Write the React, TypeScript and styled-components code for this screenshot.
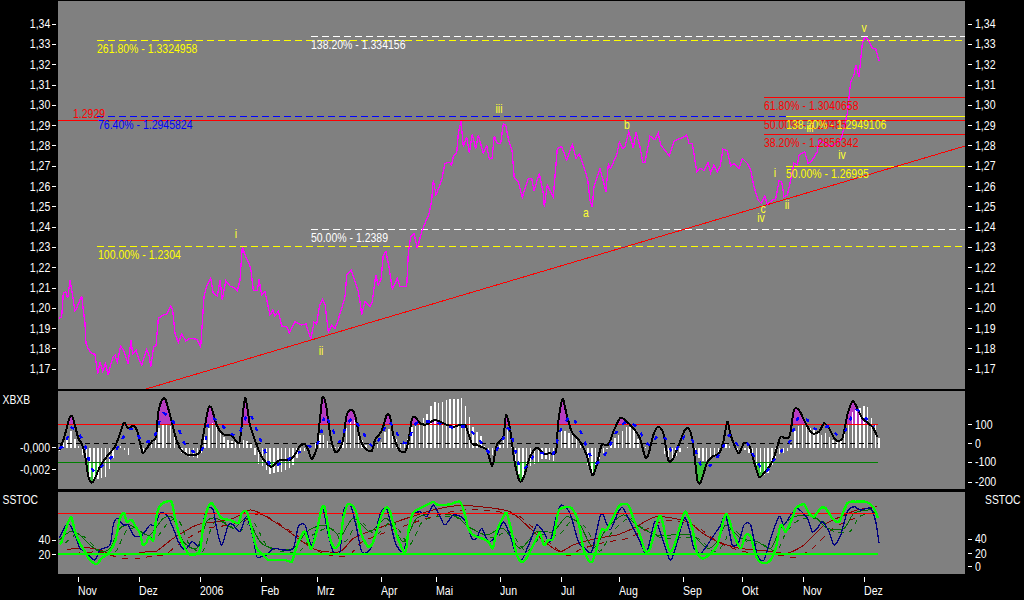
import React from "react"
import styled, { createGlobalStyle } from "styled-components"

const GlobalStyle = createGlobalStyle`
  html, body {
    margin: 0;
    padding: 0;
    background: #000;
  }
`

const Page = styled.div`
  width: 1024px;
  height: 600px;
  padding-top: 1px;
  box-sizing: border-box;
  background: #000;
  color: #fff;
  font-family: "Liberation Sans", Arial, sans-serif;
  font-size: 12px;
  overflow: hidden;
`

const Row = styled.div<{ $h: number; $mb?: number }>`
  display: grid;
  grid-template-columns: 58px 907px 59px;
  height: ${(p) => p.$h}px;
  margin-bottom: ${(p) => p.$mb ?? 0}px;
`

const Axis = styled.div<{ $top?: number }>`
  display: flex;
  flex-direction: column;
  padding-top: ${(p) => p.$top ?? 0}px;
`

const Tick = styled.div<{ $right?: boolean; $mt?: number; $h?: number }>`
  display: flex;
  flex-direction: ${(p) => (p.$right ? "row-reverse" : "row")};
  justify-content: flex-end;
  align-items: center;
  gap: ${(p) => (p.$right ? 3 : 2)}px;
  height: ${(p) => p.$h ?? 12}px;
  margin-top: ${(p) => p.$mt ?? 0}px;
  padding: ${(p) => (p.$right ? "0 0 0 3px" : "0 2px 0 0")};
  line-height: 12px;
  white-space: nowrap;
`

// the reference font is narrower than Liberation at the same height
const TickLabel = styled.span<{ $right?: boolean }>`
  display: inline-block;
  transform: scaleX(0.88);
  transform-origin: ${(p) => (p.$right ? "left" : "right")} center;
`

const TickMark = styled.i`
  display: block;
  width: 4px;
  height: 1px;
  background: #fff;
`

const PanelTitle = styled.div<{ $mt?: number; $left?: number }>`
  height: 14px;
  line-height: 14px;
  margin-top: ${(p) => p.$mt ?? 0}px;
  padding-left: ${(p) => p.$left ?? 3}px;
  white-space: nowrap;
  transform: scaleX(0.86);
  transform-origin: left center;
`

const RightTitle = styled(PanelTitle)`
  margin-left: 20px;
  padding-left: 0;
`

const Plot = styled.div`
  background: #808080;
  overflow: hidden;

  svg {
    display: block;
  }
  text {
    font-family: "Liberation Sans", Arial, sans-serif;
    font-size: 12px;
  }
`

const TimeAxis = styled.div`
  display: flex;
  height: 26px;
  padding-left: 78px;
`

const TimeCell = styled.div<{ $w: number }>`
  width: ${(p) => p.$w}px;
  flex: none;
  padding-top: 3px;
`

const TimeMark = styled.i`
  display: block;
  width: 1px;
  height: 5px;
  background: #fff;
`

const TimeLabel = styled.div`
  margin-top: 3px;
  line-height: 13px;
  white-space: nowrap;
  transform: scaleX(0.88);
  transform-origin: left center;
`

type Pt = [number, number]

// points were read off at 3x from crops, so map them back to page coords
function seg(ox: number, oy: number, raw: string): Pt[] {
  return raw
    .trim()
    .split(/\s+/)
    .map((s) => {
      const [x, y] = s.split(",").map(Number)
      return [ox + x / 3, oy + y / 3] as Pt
    })
}

const toStr = (pts: Pt[]) => pts.map(([x, y]) => `${x.toFixed(1)},${y.toFixed(1)}`).join(" ")

// catmull-rom through the points, the indicators are smooth in the reference
function smooth(pts: Pt[]) {
  let d = `M${pts[0][0].toFixed(1)} ${pts[0][1].toFixed(1)}`
  for (let i = 0; i < pts.length - 1; i++) {
    const p0 = pts[Math.max(i - 1, 0)]
    const p1 = pts[i]
    const p2 = pts[i + 1]
    const p3 = pts[Math.min(i + 2, pts.length - 1)]
    const c1x = p1[0] + (p2[0] - p0[0]) / 8
    const c1y = p1[1] + (p2[1] - p0[1]) / 8
    const c2x = p2[0] - (p3[0] - p1[0]) / 8
    const c2y = p2[1] - (p3[1] - p1[1]) / 8
    d += `C${c1x.toFixed(1)} ${c1y.toFixed(1)} ${c2x.toFixed(1)} ${c2y.toFixed(1)} ${p2[0].toFixed(1)} ${p2[1].toFixed(1)}`
  }
  return d
}

const price = [
  ...seg(0, 200, `178,355 185,350 190,280 197,275 203,295 210,240 215,270 225,333 232,320 245,287 250,330 255,370 258,430 265,447 275,460 285,463 293,522 300,487 308,513 316,490 325,525 333,490 340,470 345,465 352,487 362,438 372,453 384,492 393,420 398,462 408,450 417,480 425,495 440,448 447,465 452,500 461,440 468,437 475,355 490,345 500,343 512,318 518,330 525,400 535,428 545,402 557,423 570,415 590,418 602,440 612,290 620,258 632,235 640,280 652,288 660,240 667,300 677,242 690,258 705,265 712,272 720,240 727,140 735,165 745,185 752,205 760,270 772,272 777,238 785,285 795,275 810,345 818,330 825,348 835,333 845,378 860,380 868,398 885,365 905,375 918,372 925,395 933,416 942,366 950,372 958,320 967,298 975,312 985,395 995,375 1005,385 1015,360`),
  ...seg(340, 200, `0,340 8,315 15,290 20,225 33,210 42,235 55,275 62,320 65,345 75,305 90,320 97,305 107,225 115,255 123,240 130,165 138,155 147,200 157,268 172,235 180,260 200,260 205,160 212,110 222,100 232,145 245,95 257,65 268,40`),
  ...seg(340, 0, `275,600 280,540 288,585 305,540 315,490 328,487 335,495 340,470 350,458 355,400 363,362 370,440 380,410 388,460 397,403 407,447 415,405 430,460 440,437 448,477 456,475 463,407 472,430 482,430 490,372 497,375 507,425 516,450 523,535 535,545 547,592 565,535 575,535 582,572 598,520 610,580 613,620 622,555 640,590 652,445 665,440 680,480 697,433 708,475 718,462 735,510 743,540 750,600 757,621 762,560 780,505 798,575 805,492 812,505 830,465 838,427 848,445 855,440 866,395 880,445 888,395 900,440 908,487 915,487 930,408 945,420 955,400 962,435 988,468 1003,423`),
  ...seg(684, 0, `0,410 8,405 15,430 25,430 38,515 50,505 60,512 72,488 80,518 90,495 100,515 108,500 117,448 130,452 140,498 150,490 165,505 175,475 190,490 200,510 210,560 222,600 232,610 242,587 250,613 265,600 275,597 285,543 293,545 300,590 310,585 320,540 330,490 340,495 345,465 362,455 372,490 382,485 400,455 405,420 440,440 470,420 480,385 490,340 500,245 510,225 515,195 525,230 535,130 542,112 550,115 565,145 575,147 585,182`),
]

const macdBars = [
  ...seg(0, 385, `178,200 190,175 205,150 215,135 225,165 240,190 258,235 270,275 285,285 300,280 320,275 335,230 350,190 365,183 385,210 400,185 415,190 430,200 445,180 470,150 480,120 500,120 515,125 530,170 545,205 570,215 600,222 610,170 625,130 640,110 655,130 675,160 700,170 735,165 750,170 760,190 770,232 790,245 812,268 830,260 850,260 880,240 900,200 930,195 945,180 960,150 975,150 990,185`),
  ...seg(340, 385, `0,185 10,170 25,110 40,100 55,130 70,175 90,190 105,180 125,170 140,125 160,150 180,175 200,175 215,125 240,110 260,90 280,48 300,55 325,42 350,42 365,40 380,70 395,120 410,140 425,155 440,200 455,212 470,195 490,165 505,130 515,185 530,250 545,285 560,255 575,240 590,235 610,220 640,230 650,185 665,130 680,140 700,150 725,175 740,230 755,270 770,240 785,210 800,195 820,165 840,145 860,125 880,125 900,180 915,185 930,190 950,190 965,190 985,225 1000,220`),
  ...seg(684, 385, `5,185 20,185 35,210 50,225 65,230 85,220 105,205 120,175 140,185 165,200 190,195 205,220 220,245 235,270 250,270 270,225 290,205 305,205 320,185 335,130 350,120 370,125 390,135 410,150 425,145 445,165 470,165 490,130 505,80 520,75 542,60 555,70 565,108 575,120 585,160`),
]

const macdLine = [
  ...seg(0, 385, `178,195 190,165 200,130 208,100 215,93 222,110 235,160 245,175 255,210 265,275 275,293 285,280 300,245 320,215 345,185 360,145 372,113 385,130 400,122 412,140 425,195 430,205 440,190 455,170 468,155 475,80 488,42 497,45 510,90 525,150 540,190 560,208 585,210 600,200 610,150 625,70 635,70 650,120 670,148 695,152 710,170 720,165 735,40 750,120 770,180 785,215 800,235 815,245 840,225 870,225 890,200 900,182 915,178 925,195 935,222 950,190 960,100 968,35 978,60 990,145 1005,200`),
  ...seg(340, 385, `0,190 10,160 20,90 33,75 45,90 60,160 75,190 95,198 105,165 120,145 128,130 140,90 150,95 160,150 178,195 195,200 205,170 215,105 225,95 240,115 260,118 285,105 310,115 340,125 375,120 395,175 415,182 440,195 457,243 470,180 490,155 498,90 510,130 522,220 537,285 545,288 555,265 570,215 590,188 610,205 630,205 648,200 655,110 668,42 678,80 695,140 720,170 740,210 757,270 770,240 785,180 805,180 820,140 840,100 855,105 880,130 900,160 915,215 925,210 940,150 955,125 970,145 985,225 1000,220`),
  ...seg(684, 385, `0,140 12,130 22,150 30,200 40,285 48,295 58,270 68,235 85,215 105,205 118,170 130,110 140,150 155,190 165,205 180,175 195,180 210,230 225,275 240,265 265,230 280,185 290,155 305,160 318,150 330,75 345,75 365,115 385,145 405,140 420,115 435,130 455,165 475,160 490,90 505,50 515,60 535,100 565,125 580,155`),
]

const macdSignal = [
  ...seg(0, 385, `178,190 195,180 205,150 215,128 230,140 245,160 260,195 270,240 285,260 310,240 340,210 365,165 385,135 405,135 425,170 440,170 460,165 475,120 490,85 510,100 535,130 550,170 565,190 595,205 615,175 625,110 640,100 665,120 690,145 715,150 730,115 745,85 760,105 775,150 790,185 810,240 830,240 870,220 900,200 925,182 940,190 960,160 975,90 995,130 1010,155`),
  ...seg(340, 385, `0,170 20,120 40,100 60,130 80,160 100,185 125,150 145,110 165,135 185,170 205,170 220,125 240,110 285,112 340,128 375,125 405,150 425,175 450,205 470,195 490,160 505,130 520,170 540,250 565,240 585,205 610,205 640,205 660,140 690,95 715,125 730,160 750,210 770,235 800,200 830,140 860,110 895,130 915,170 935,180 955,150 980,165 1000,205`),
  ...seg(684, 385, `0,155 15,155 30,175 40,215 55,245 80,240 105,210 120,180 135,150 160,178 190,175 215,225 245,260 270,225 295,195 320,165 330,130 345,95 370,105 390,130 410,130 435,125 460,150 485,135 505,90 520,75 545,100 570,125`),
]

const stocFast = [
  ...seg(0, 385, `178,478 185,470 195,440 205,410 215,398 225,440 240,475 255,500 270,525 290,537 305,520 325,505 345,470 360,400 372,383 380,410 395,405 410,430 420,445 428,478 438,475 447,455 460,465 470,390 482,360 500,350 515,352 530,420 545,470 565,505 580,510 600,495 610,420 625,365 635,355 650,375 665,400 690,405 715,415 725,385 740,380 755,430 770,490 790,510 805,525 830,525 855,525 875,530 885,500 900,460 915,440 933,492 950,440 965,370 975,370 990,460 1005,490`),
  ...seg(340, 385, `0,470 10,400 22,360 35,360 48,380 65,450 85,485 100,470 125,390 140,367 150,380 170,450 195,505 205,440 218,385 240,370 270,355 280,350 295,360 330,358 360,350 375,390 385,430 400,450 425,460 445,470 458,490 470,440 490,395 500,385 515,440 530,510 548,532 565,510 590,460 600,445 612,480 625,465 640,460 655,380 670,368 695,370 715,410 730,490 745,525 757,530 770,490 785,435 800,435 820,395 840,360 865,360 880,400 900,450 915,498 930,490 955,400 965,400 985,490 1000,490`),
  ...seg(684, 385, `0,385 10,390 25,430 38,500 55,520 75,510 100,480 120,400 130,390 150,450 170,490 185,450 200,455 215,510 230,532 255,530 275,490 290,420 305,440 325,400 335,370 360,358 375,385 390,395 410,370 425,370 445,400 465,410 490,355 515,350 550,352 570,370 582,400`),
]

const stocNavy = [
  ...seg(0, 385, `178,460 195,425 210,420 225,450 240,490 255,500 270,515 285,525 300,495 330,480 340,420 352,400 370,420 385,420 400,450 420,455 435,440 450,420 465,420 480,385 500,390 520,430 535,470 555,495 575,470 590,480 600,480 612,400 625,370 640,375 650,430 665,480 685,420 700,420 720,440 740,395 760,460 770,515 785,515 800,510 820,490 850,495 880,490 895,425 915,420 935,480 960,390 970,375 985,450 1000,500`),
  ...seg(340, 385, `0,500 10,380 25,358 35,370 50,430 65,500 85,500 100,470 120,390 140,370 165,470 185,500 200,470 215,395 240,380 260,395 280,360 300,395 315,420 340,390 370,400 385,430 395,460 410,460 425,430 445,470 470,450 490,410 510,450 525,500 545,525 570,470 590,420 610,440 630,470 650,390 665,360 690,385 715,470 735,490 755,500 780,395 790,390 810,435 835,380 850,370 880,430 900,470 920,505 945,410 970,470 990,525 1005,495`),
  ...seg(684, 385, `0,400 15,430 30,490 50,505 70,480 90,450 110,420 125,390 145,480 165,470 180,420 200,420 220,510 240,525 260,460 285,395 300,420 320,390 340,370 370,400 385,440 400,430 415,410 435,440 450,480 470,450 490,380 510,365 530,375 560,370 575,410 585,475`),
]

const stocGreen = [
  ...seg(0, 385, `178,465 210,440 240,450 270,480 300,500 330,490 360,430 390,420 420,440 450,450 490,400 520,400 550,470 590,490 620,410 650,400 700,430 740,400 780,470 820,490 880,490 920,440 970,420 1010,445`),
  ...seg(340, 385, `0,460 40,400 90,440 140,400 190,470 230,400 290,385 350,395 385,425 440,450 490,430 540,490 590,440 640,440 680,395 720,420 760,490 800,430 850,390 890,420 950,450`),
  ...seg(684, 385, `20,450 70,490 100,470 125,420 170,460 220,470 260,490 290,430 330,395 390,395 430,430 480,430 510,385 560,375 580,395`),
]

const stocRed = [
  ...seg(0, 385, `200,495 225,490 280,490 330,505 380,510 440,500 470,498 520,460 590,420 650,410 700,400 750,375 790,390 860,435 900,465 950,495`),
  ...seg(340, 385, `0,500 40,460 100,435 170,410 230,390 280,375 350,362 420,365 510,380 570,430 620,475 660,500 700,480 770,460 830,450 880,430 950,395`),
  ...seg(684, 385, `10,410 50,440 90,465 130,480 165,490 220,495 270,500 310,505 360,480 420,420 470,395 520,375 580,365`),
]

// lagging copy of a line, stops at the last bar like the rest of the panel
const lag = (pts: Pt[], dx: number, dy: number) =>
  pts.map(([x, y]) => [x + dx, y + dy] as Pt).filter(([x]) => x < 878)

function valueAt(pts: Pt[], x: number) {
  for (let i = 1; i < pts.length; i++) {
    if (x <= pts[i][0]) {
      const [x0, y0] = pts[i - 1]
      const [x1, y1] = pts[i]
      return y0 + ((x - x0) / (x1 - x0)) * (y1 - y0)
    }
  }
  return pts[pts.length - 1][1]
}

const ZERO = 447.5
const barXs = Array.from({ length: 215 }, (_, i) => 59.5 + i * 3.83)

const aliased = { fill: "none", shapeRendering: "crispEdges" as const }

const fibLines = [
  { x: 97, y: 40.5, color: "#ffff00", dash: true },
  { x: 311, y: 36.5, color: "#ffffff", dash: true },
  { x: 97, y: 116.5, x2: 786, color: "#0000ff", dash: true },
  { x: 97, y: 246.5, color: "#ffff00", dash: true },
  { x: 311, y: 229.5, color: "#ffffff", dash: true },
  { x: 764, y: 97.5, color: "#ff0000" },
  { x: 764, y: 134.5, color: "#ff0000" },
  { x: 786, y: 116.5, color: "#ffff00" },
  { x: 786, y: 166.5, color: "#ffff00" },
]

const fibLabels = [
  { x: 97, y: 53, t: "261.80% - 1.3324958", c: "#ffff00" },
  { x: 311, y: 49, t: "138.20% - 1.334156", c: "#ffffff" },
  { x: 73, y: 118, t: "1.2929", c: "#ff0000" },
  { x: 98, y: 129, t: "76.40% - 1.2945824", c: "#0000ff" },
  { x: 98, y: 259, t: "100.00% - 1.2304", c: "#ffff00" },
  { x: 311, y: 242, t: "50.00% - 1.2389", c: "#ffffff" },
  { x: 764, y: 110, t: "61.80% - 1.3040658", c: "#ff0000" },
  { x: 764, y: 129, t: "50.00% - 1.29485", c: "#ff0000" },
  { x: 764, y: 147, t: "38.20% - 1.2856342", c: "#ff0000" },
  { x: 786, y: 129, t: "138.20% - 1.2949106", c: "#ffff00" },
  { x: 786, y: 178, t: "50.00% - 1.26995", c: "#ffff00" },
]

const waveLabels = [
  { x: 236, y: 238, t: "i" },
  { x: 321, y: 355, t: "ii" },
  { x: 499, y: 113, t: "iii" },
  { x: 586, y: 217, t: "a" },
  { x: 627, y: 129, t: "b" },
  { x: 763, y: 213, t: "c" },
  { x: 761, y: 222, t: "iv" },
  { x: 775, y: 177, t: "i" },
  { x: 787, y: 209, t: "ii" },
  { x: 810, y: 132, t: "iii" },
  { x: 842, y: 159, t: "iv" },
  { x: 864, y: 32, t: "v" },
]

const priceTicks = ["1,34", "1,33", "1,32", "1,31", "1,30", "1,29", "1,28", "1,27", "1,26", "1,25", "1,24", "1,23", "1,22", "1,21", "1,20", "1,19", "1,18", "1,17"]

const months = [
  { t: "Nov", w: 61 },
  { t: "Dez", w: 61 },
  { t: "2006", w: 61 },
  { t: "Feb", w: 56 },
  { t: "Mrz", w: 64 },
  { t: "Apr", w: 55 },
  { t: "Mai", w: 64 },
  { t: "Jun", w: 61 },
  { t: "Jul", w: 58 },
  { t: "Aug", w: 64 },
  { t: "Sep", w: 59 },
  { t: "Okt", w: 61 },
  { t: "Nov", w: 61 },
  { t: "Dez", w: 60 },
]

function ScaleTick({ t, right, mt }: { t: string; right?: boolean; mt: number }) {
  return (
    <Tick $right={right} $mt={mt}>
      <TickLabel $right={right}>{t}</TickLabel>
      <TickMark />
    </Tick>
  )
}

function PriceAxis({ right }: { right?: boolean }) {
  return (
    <Axis $top={13}>
      {priceTicks.map((t) => (
        <Tick key={t} $right={right} $h={20.3}>
          <TickLabel $right={right}>{t}</TickLabel>
          <TickMark />
        </Tick>
      ))}
    </Axis>
  )
}

function PriceChart() {
  return (
    <svg width={907} height={388} viewBox="58 1 907 388">
      {fibLines.map((l) => (
        <line
          key={`${l.x}-${l.y}`}
          x1={l.x}
          x2={l.x2 ?? 965}
          y1={l.y}
          y2={l.y}
          stroke={l.color}
          strokeWidth={1}
          strokeDasharray={l.dash ? "7 4" : undefined}
          shapeRendering="crispEdges"
        />
      ))}
      <line x1={58} x2={965} y1={120.5} y2={120.5} stroke="#ff0000" strokeWidth={1} shapeRendering="crispEdges" />
      <line x1={146} y1={389} x2={965} y2={146} stroke="#ff0000" strokeWidth={1} shapeRendering="crispEdges" />
      <polyline points={toStr(price)} stroke="#ff00ff" strokeWidth={1.3} {...aliased} />
      {fibLabels.map((l) => (
        <text key={l.t} transform={`translate(${l.x} ${l.y}) scale(0.875 1)`} fill={l.c}>
          {l.t}
        </text>
      ))}
      {waveLabels.map((l) => (
        <text key={`${l.x}${l.t}`} transform={`translate(${l.x} ${l.y}) scale(0.875 1)`} fill="#ffff33" textAnchor="middle">
          {l.t}
        </text>
      ))}
    </svg>
  )
}

function MacdChart() {
  const line = smooth(macdLine)
  const last = macdLine[macdLine.length - 1]
  const area = (y: number) => `${line} L${last[0]} ${y} L${macdLine[0][0]} ${y} Z`
  return (
    <svg width={907} height={98} viewBox="58 391 907 98">
      <defs>
        <clipPath id="overbought">
          <rect x={58} y={391} width={907} height={33.5} />
        </clipPath>
        <clipPath id="oversold">
          <rect x={58} y={462} width={907} height={27} />
        </clipPath>
      </defs>
      <path d={area(424.5)} fill="#b63cc0" clipPath="url(#overbought)" />
      <path d={area(462)} fill="#3cc03c" clipPath="url(#oversold)" />
      {barXs.map((x) => {
        const y = valueAt(macdBars, x)
        return <line key={x} x1={x} x2={x} y1={ZERO} y2={y} stroke="#fff" strokeWidth={1.4} shapeRendering="crispEdges" />
      })}
      <line x1={58} x2={878} y1={443.5} y2={443.5} stroke="#000" strokeWidth={1} strokeDasharray="5 4" shapeRendering="crispEdges" />
      <line x1={58} x2={878} y1={424.5} y2={424.5} stroke="#ff0000" strokeWidth={1} shapeRendering="crispEdges" />
      <line x1={58} x2={878} y1={462.5} y2={462.5} stroke="#008000" strokeWidth={1} shapeRendering="crispEdges" />
      <path d={line} stroke="#000" strokeWidth={2} {...aliased} />
      <path d={smooth(macdSignal)} stroke="#0000ff" strokeWidth={2.4} strokeDasharray="4 8" {...aliased} />
    </svg>
  )
}

function StocChart() {
  return (
    <svg width={907} height={82} viewBox="58 492 907 82">
      <path d={smooth(stocRed)} stroke="#8b0000" strokeWidth={1} {...aliased} />
      <path d={smooth(lag(stocRed, 8, 4))} stroke="#8b0000" strokeWidth={1} strokeDasharray="6 6" {...aliased} />
      <path d={smooth(stocGreen)} stroke="#007000" strokeWidth={1} {...aliased} />
      <path d={smooth(lag(stocGreen, 6, 3))} stroke="#007000" strokeWidth={1} strokeDasharray="5 5" {...aliased} />
      <path d={smooth(stocNavy)} stroke="#000080" strokeWidth={1.3} {...aliased} />
      <line x1={58} x2={878} y1={513.5} y2={513.5} stroke="#ff0000" strokeWidth={1.5} shapeRendering="crispEdges" />
      <line x1={58} x2={878} y1={553.5} y2={553.5} stroke="#00ff00" strokeWidth={2} shapeRendering="crispEdges" />
      <path d={smooth(stocFast)} stroke="#00ff00" strokeWidth={2.4} {...aliased} />
    </svg>
  )
}

export default function App() {
  return (
    <Page>
      <GlobalStyle />
      <Row $h={388} $mb={2}>
        <PriceAxis />
        <Plot>
          <PriceChart />
        </Plot>
        <PriceAxis right />
      </Row>
      <Row $h={98} $mb={3}>
        <Axis>
          <PanelTitle $mt={2}>XBXB</PanelTitle>
          <ScaleTick t="-0,000" mt={34.7} />
          <ScaleTick t="-0,002" mt={10.3} />
        </Axis>
        <Plot>
          <MacdChart />
        </Plot>
        <Axis>
          <ScaleTick t="100" right mt={27.5} />
          <ScaleTick t="0" right mt={7} />
          <ScaleTick t="-100" right mt={6.8} />
          <ScaleTick t="-200" right mt={8.2} />
        </Axis>
      </Row>
      <Row $h={82}>
        <Axis>
          <PanelTitle $mt={1}>SSTOC</PanelTitle>
          <ScaleTick t="40" mt={27.3} />
          <ScaleTick t="20" mt={2.7} />
        </Axis>
        <Plot>
          <StocChart />
        </Plot>
        <Axis>
          <RightTitle $mt={1}>SSTOC</RightTitle>
          <ScaleTick t="40" right mt={26} />
          <ScaleTick t="20" right mt={2.6} />
          <ScaleTick t="0" right mt={1.1} />
        </Axis>
      </Row>
      <TimeAxis>
        {months.map((m) => (
          <TimeCell key={`${m.t}${m.w}`} $w={m.w}>
            <TimeMark />
            <TimeLabel>{m.t}</TimeLabel>
          </TimeCell>
        ))}
      </TimeAxis>
    </Page>
  )
}
